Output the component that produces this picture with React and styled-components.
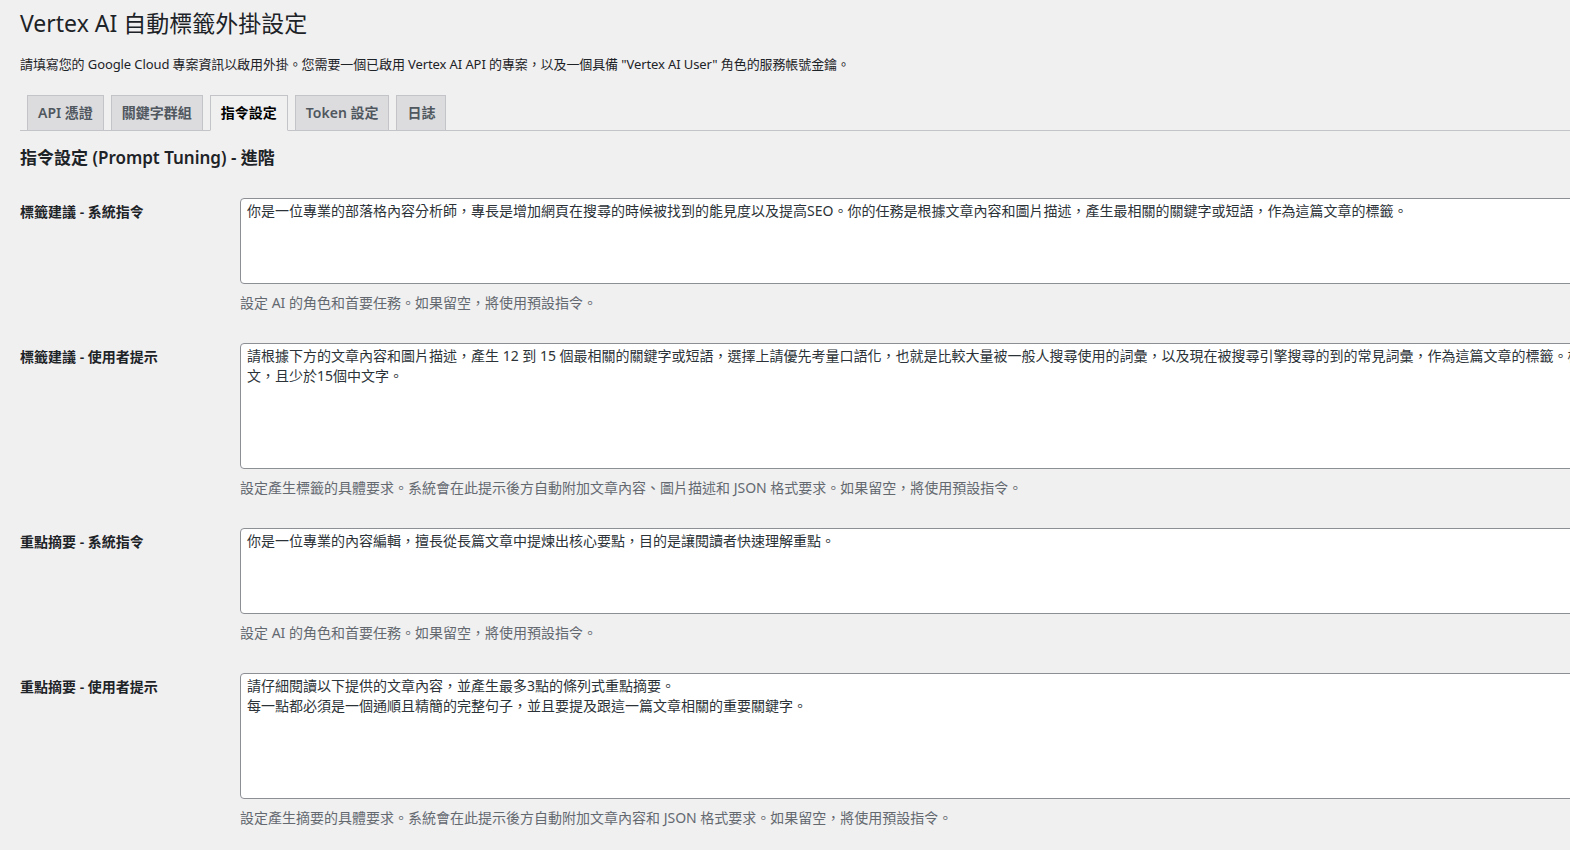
import React from "react";
import styled, { createGlobalStyle } from "styled-components";

const Global = createGlobalStyle`
  html, body { margin: 0; padding: 0; overflow: hidden; }
  body {
    background: #f0f0f1;
    color: #1d2327;
    font-family: "Noto Sans", "Noto Sans CJK TC", sans-serif;
    font-size: 13px;
    line-height: 1.4em;
  }
`;

const Wrap = styled.div`
  padding: 0 0 0 20px;
  width: 1900px;
`;

const Title = styled.h1`
  margin: 0;
  padding: 9px 0 4px;
  font-size: 23px;
  font-weight: 400;
  line-height: 1.3;
  color: #1d2327;
`;

const Intro = styled.p`
  margin: 12px 0 0;
  font-size: 13px;
  line-height: 1.5;
  letter-spacing: -0.1px;
  color: #1d2327;
`;

const TabBar = styled.nav`
  display: flex;
  margin-top: 21px;
  border-bottom: 1px solid #c3c4c7;
  width: 1550px;
`;

const Tab = styled.a`
  display: block;
  margin-left: 7px;
  margin-bottom: -1px;
  padding: 5px 10px;
  font-size: 14px;
  font-weight: 600;
  line-height: 24px;
  border: 1px solid #c3c4c7;
  border-bottom-color: ${(p) => (p.$active ? "#f0f0f1" : "#c3c4c7")};
  background: ${(p) => (p.$active ? "#f0f0f1" : "#dcdcde")};
  color: ${(p) => (p.$active ? "#000" : "#50575e")};
  text-decoration: none;
  white-space: nowrap;
`;

const SectionTitle = styled.h2`
  margin: 16px 0 14px;
  font-size: 17px;
  font-weight: 600;
  line-height: 1.3;
  color: #1d2327;
`;

const Row = styled.div`
  display: flex;
  align-items: flex-start;
`;

const Label = styled.label`
  flex: 0 0 200px;
  padding: 20px 10px 20px 0;
  font-size: 14px;
  font-weight: 600;
  line-height: 1.3;
  color: #1d2327;
`;

const Field = styled.div`
  padding: 15px 10px;
`;

const Area = styled.textarea`
  display: block;
  box-sizing: border-box;
  width: 1500px;
  height: ${(p) => (p.$rows === 6 ? 126 : 86)}px;
  margin: 0;
  padding: 2px 6px;
  border: 1px solid #8c8f94;
  border-radius: 4px;
  background: #fff;
  color: #2c3338;
  font-family: "Noto Sans", "Noto Sans CJK TC", sans-serif;
  font-size: 14px;
  line-height: 20px;
  resize: vertical;
  white-space: pre-wrap;
  outline: none;
`;

const Desc = styled.p`
  margin: 8px 0 0;
  font-size: 14px;
  line-height: 1.5;
  color: #646970;
`;

const tabs = ["API 憑證", "關鍵字群組", "指令設定", "Token 設定", "日誌"];

const rows = [
  {
    label: "標籤建議 - 系統指令",
    rows: 4,
    value:
      "你是一位專業的部落格內容分析師，專長是增加網頁在搜尋的時候被找到的能見度以及提高SEO。你的任務是根據文章內容和圖片描述，產生最相關的關鍵字或短語，作為這篇文章的標籤。",
    desc: "設定 AI 的角色和首要任務。如果留空，將使用預設指令。",
  },
  {
    label: "標籤建議 - 使用者提示",
    rows: 6,
    value:
      "請根據下方的文章內容和圖片描述，產生 12 到 15 個最相關的關鍵字或短語，選擇上請優先考量口語化，也就是比較大量被一般人搜尋使用的詞彙，以及現在被搜尋引擎搜尋的到的常見詞彙，作為這篇文章的標籤。標籤必須是繁體中\n文，且少於15個中文字。",
    desc: "設定產生標籤的具體要求。系統會在此提示後方自動附加文章內容、圖片描述和 JSON 格式要求。如果留空，將使用預設指令。",
  },
  {
    label: "重點摘要 - 系統指令",
    rows: 4,
    value: "你是一位專業的內容編輯，擅長從長篇文章中提煉出核心要點，目的是讓閱讀者快速理解重點。",
    desc: "設定 AI 的角色和首要任務。如果留空，將使用預設指令。",
  },
  {
    label: "重點摘要 - 使用者提示",
    rows: 6,
    value:
      "請仔細閱讀以下提供的文章內容，並產生最多3點的條列式重點摘要。\n每一點都必須是一個通順且精簡的完整句子，並且要提及跟這一篇文章相關的重要關鍵字。",
    desc: "設定產生摘要的具體要求。系統會在此提示後方自動附加文章內容和 JSON 格式要求。如果留空，將使用預設指令。",
  },
];

export default function App() {
  return (
    <>
      <Global />
      <Wrap>
        <Title>Vertex AI 自動標籤外掛設定</Title>
        <Intro>
          請填寫您的 Google Cloud 專案資訊以啟用外掛。您需要一個已啟用 Vertex AI API 的專案，以及一個具備 "Vertex AI User" 角色的服務帳號金鑰。
        </Intro>
        <TabBar>
          {tabs.map((t) => (
            <Tab key={t} href="#" $active={t === "指令設定"}>
              {t}
            </Tab>
          ))}
        </TabBar>
        <SectionTitle>指令設定 (Prompt Tuning) - 進階</SectionTitle>
        {rows.map((r) => (
          <Row key={r.label}>
            <Label>{r.label}</Label>
            <Field>
              <Area $rows={r.rows} defaultValue={r.value} />
              <Desc>{r.desc}</Desc>
            </Field>
          </Row>
        ))}
      </Wrap>
    </>
  );
}
